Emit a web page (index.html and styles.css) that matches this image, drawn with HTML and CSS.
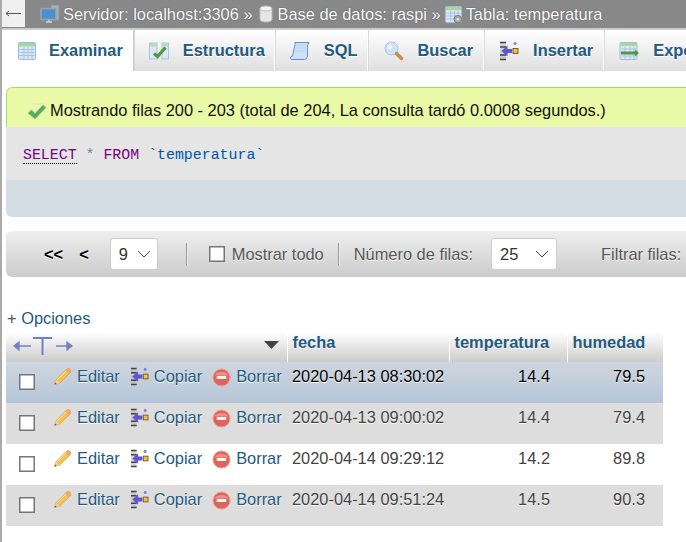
FILE: index.html
```html
<!DOCTYPE html>
<html lang="es">
<head>
<meta charset="utf-8">
<title>temperatura</title>
<link rel="stylesheet" href="styles.css">
</head>
<body>
<svg class="defs" width="0" height="0" aria-hidden="true">
  <defs>
    <symbol id="i-table" viewBox="0 0 20 20">
      <rect x="1.500" y="1.500" width="17" height="17" rx="1.500" fill="#dbe8f7" stroke="#9dbde0"/>
      <rect x="2" y="2" width="16" height="3.500" fill="#a9d69a"/>
      <path d="M2.500 8.500h15M2.500 11.500h15M2.500 14.500h15M7 6v12M11 6v12M15 6v12" stroke="#a9c3e3" fill="none"/>
    </symbol>
    <symbol id="i-struct" viewBox="0 0 20 20">
      <rect x="0.500" y="2" width="7.500" height="16" fill="#dbe8f7" stroke="#a9c3e3"/>
      <rect x="13" y="2" width="6.500" height="16" fill="#dbe8f7" stroke="#a9c3e3"/>
      <rect x="1" y="2.500" width="6.500" height="3" fill="#b9dca8"/>
      <rect x="13.500" y="2.500" width="5.500" height="3" fill="#b9dca8"/>
      <path d="M5 12.500l3.500 3 8-9" stroke="#4f9a3c" stroke-width="3.200" fill="none"/>
    </symbol>
    <symbol id="i-sql" viewBox="0 0 20 20">
      <path d="M5 1.500h14l-1.500 3v9.500c0 2-1 4.500-3 4.500H2c-1 0-1.500-.7-1.500-1.700 0-1 1-1.600 2-1.600L5 4z" fill="#cfe1f6" stroke="#5f93cf"/>
      <path d="M6.500 4h10M6 7h10M5.500 10h10" stroke="#b9d2ee" fill="none"/>
    </symbol>
    <symbol id="i-search" viewBox="0 0 20 20">
      <circle cx="7.500" cy="7.500" r="6.500" fill="#cfe3f8" stroke="#a8c6e6"/>
      <circle cx="6" cy="6" r="2.500" fill="#eef6fe"/>
      <path d="M12.500 12.500l5 5" stroke="#c98a4a" stroke-width="3.500" stroke-linecap="round"/>
    </symbol>
    <symbol id="i-insert" viewBox="0 0 20 20">
      <rect x="1" y="2" width="6" height="16" fill="#bbb" opacity=".6"/>
      <path d="M1 1.500h6M1 18.500h6M1 6h6M1 14h6" stroke="#444" stroke-width="1.600" fill="none"/>
      <path d="M2.500 10l6-5.500V8h4.500v4H8.500v3.500z" fill="#5d55d6"/>
      <rect x="14" y="7.500" width="5" height="5" fill="#eec14c" stroke="#6b5420" stroke-width=".9"/>
      <circle cx="16" cy="2.500" r="1.600" fill="#7f86d8"/>
    </symbol>
    <symbol id="i-export" viewBox="0 0 20 20">
      <rect x="1" y="1.500" width="17" height="17" rx="1" fill="#dbe8f7" stroke="#9dbde0"/>
      <rect x="1.500" y="2" width="16" height="3" fill="#a9d69a"/>
      <path d="M2 8h15M2 15h15M6 6v12M11 6v12M15 6v12" stroke="#a9c3e3" fill="none"/>
      <path d="M2 10.500h14V8.500l4 3.500-4 3.500v-2H2z" fill="#4f9a3c"/>
    </symbol>
    <symbol id="i-ok" viewBox="0 0 20 20">
      <path d="M1 11l3.500-3 3.500 3.500L16 3l3 2.500L8 17z" fill="#5aab5f" stroke="#8cc690" stroke-width=".6"/>
      <path d="M4 2h13" stroke="#ddd" fill="none"/>
    </symbol>
    <symbol id="i-edit" viewBox="0 0 20 20">
      <path d="M1.500 18.500l1.500-5L14 2.500c1.200-1.200 3-1.100 4 0s1 2.700 0 3.800L7 17z" fill="#f2c356" stroke="#d99a3a" stroke-width=".7"/>
      <path d="M14 2.500c1.200-1.200 3-1.100 4 0s1 2.700 0 3.800l-1.500 1.400-4-4z" fill="#f0a868"/>
      <path d="M1.500 18.500l1.500-5 4 3.500z" fill="#e8d2a8"/>
      <path d="M1.500 18.500l.7-2.300 1.700 1.500z" fill="#6b5535"/>
      <path d="M4 13.500L14 4" stroke="#fbe9a8" fill="none"/>
    </symbol>
    <symbol id="i-del" viewBox="0 0 20 20">
      <circle cx="10" cy="10" r="9" fill="#e0635a" stroke="#e9a49c"/>
      <path d="M2.500 8a8 6 0 0 1 15 0z" fill="#ee8f86"/>
      <rect x="5" y="8.500" width="10" height="3" fill="#fff"/>
    </symbol>
  </defs>
</svg>

<div class="page">
  <header class="topbar">
    <button class="back" type="button"><svg viewBox="0 0 15 7" width="15" height="7"><path d="M0 3.500h15M0 3.500l3-2.500M0 3.500l3 2.500" fill="none" stroke="#555"/></svg></button>
    <span class="crumb">
      <svg class="crumb-icon" viewBox="0 0 20 20" width="20" height="20">
        <rect x="11" y="1" width="8" height="15" fill="#aab0b5" stroke="#8c9296"/>
        <circle cx="17" cy="10" r="1" fill="#6fd06f"/>
        <rect x="1" y="4.500" width="15" height="11" fill="#4f8fd0" stroke="#99a4ad" stroke-width="1.500"/>
        <path d="M6 18h6M9 16v2" stroke="#cfd3d6" stroke-width="1.500"/>
      </svg>
      Servidor: localhost:3306 »
    </span>
    <span class="crumb crumb-db">
      <svg class="crumb-icon db" viewBox="0 0 14 18" width="14" height="18">
        <path d="M1 3.500v11c0 1.500 2.700 2.500 6 2.500s6-1 6-2.500v-11z" fill="#e6e6e6" stroke="#bbb"/>
        <ellipse cx="7" cy="3.500" rx="6" ry="2.500" fill="#f6f6f6" stroke="#bbb"/>
      </svg>
      Base de datos: raspi »
    </span>
    <span class="crumb">
      <svg class="crumb-icon" viewBox="0 0 20 20" width="19" height="19">
        <use href="#i-table"/>
        <circle cx="14.500" cy="15" r="4" fill="#a5acb2" stroke="#777" stroke-width="1"/>
        <circle cx="14.500" cy="15" r="1.300" fill="#e5e5e5"/>
      </svg>
      Tabla: temperatura
    </span>
  </header>

  <nav class="tabs">
    <a class="tab tab-active"><svg class="tab-icon"><use href="#i-table"/></svg>Examinar</a>
    <a class="tab"><svg class="tab-icon"><use href="#i-struct"/></svg>Estructura</a>
    <a class="tab"><svg class="tab-icon"><use href="#i-sql"/></svg>SQL</a>
    <a class="tab tab-search"><svg class="tab-icon"><use href="#i-search"/></svg>Buscar</a>
    <a class="tab tab-insert"><svg class="tab-icon"><use href="#i-insert"/></svg>Insertar</a>
    <a class="tab"><svg class="tab-icon"><use href="#i-export"/></svg>Exportar</a>
  </nav>

  <main class="content">
    <div class="result-box">
      <div class="notice"><svg class="ok-icon"><use href="#i-ok"/></svg>Mostrando filas 200 - 203 (total de 204, La consulta tardó 0.0008 segundos.)</div>
      <div class="sql-code"><span class="kw kw-link">SELECT</span> <span class="op">*</span> <span class="kw">FROM</span> <span class="ident">`temperatura`</span></div>
      <div class="sql-tools"></div>
    </div>

    <div class="pager">
      <span class="nav-btn first">&lt;&lt;</span>
      <span class="nav-btn prev">&lt;</span>
      <span class="select-wrap page-select">
        <select class="select"><option>9</option></select>
        <svg class="chevron" viewBox="0 0 14 8" width="14" height="8"><path d="M1 1l6 6 6-6" fill="none" stroke="#444"/></svg>
      </span>
      <span class="rule first-rule"></span>
      <label class="show-all"><input class="check" type="checkbox"><span class="pager-text">Mostrar todo</span></label>
      <span class="rule second-rule"></span>
      <span class="pager-text rows-label">Número de filas:</span>
      <span class="select-wrap rows-select">
        <select class="select"><option>25</option></select>
        <svg class="chevron" viewBox="0 0 14 8" width="14" height="8"><path d="M1 1l6 6 6-6" fill="none" stroke="#444"/></svg>
      </span>
      <span class="pager-text filter-label">Filtrar filas:</span>
    </div>

    <a class="options"><span class="plus">+</span> Opciones</a>

    <table class="data">
      <colgroup>
        <col class="c-actions"><col class="c-date"><col class="c-temp"><col class="c-hum">
      </colgroup>
      <thead>
        <tr>
          <th class="th-tools">
            <div class="th-inner">
              <svg class="col-arrows" viewBox="0 0 60 20" width="60" height="20">
                <path d="M1 10h17M1 10l5-4v8zM43 10h16M59 10l-5-4v8z" fill="#7580c2" stroke="#7580c2" stroke-width="1.300"/>
                <path d="M20 2h19M29.500 2v17" stroke="#7580c2" stroke-width="2" fill="none"/>
              </svg>
              <svg class="sort-tri" viewBox="0 0 15 8" width="15" height="8"><path d="M0 0h15l-7.500 8z" fill="#444"/></svg>
            </div>
          </th>
          <th>fecha</th>
          <th>temperatura</th>
          <th>humedad</th>
        </tr>
      </thead>
      <tbody>
        <tr class="row-marked">
          <td class="actions"><div class="act-inner"><input class="check row-check" type="checkbox"><a class="act act-edit"><svg class="act-icon"><use href="#i-edit"/></svg>Editar</a><a class="act act-copy"><svg class="act-icon"><use href="#i-insert"/></svg>Copiar</a><a class="act act-del"><svg class="act-icon del"><use href="#i-del"/></svg>Borrar</a></div></td>
          <td>2020-04-13 08:30:02</td><td class="num">14.4</td><td class="num num-last">79.5</td>
        </tr>
        <tr class="row-grey">
          <td class="actions"><div class="act-inner"><input class="check row-check" type="checkbox"><a class="act act-edit"><svg class="act-icon"><use href="#i-edit"/></svg>Editar</a><a class="act act-copy"><svg class="act-icon"><use href="#i-insert"/></svg>Copiar</a><a class="act act-del"><svg class="act-icon del"><use href="#i-del"/></svg>Borrar</a></div></td>
          <td>2020-04-13 09:00:02</td><td class="num">14.4</td><td class="num num-last">79.4</td>
        </tr>
        <tr class="row-white">
          <td class="actions"><div class="act-inner"><input class="check row-check" type="checkbox"><a class="act act-edit"><svg class="act-icon"><use href="#i-edit"/></svg>Editar</a><a class="act act-copy"><svg class="act-icon"><use href="#i-insert"/></svg>Copiar</a><a class="act act-del"><svg class="act-icon del"><use href="#i-del"/></svg>Borrar</a></div></td>
          <td>2020-04-14 09:29:12</td><td class="num">14.2</td><td class="num num-last">89.8</td>
        </tr>
        <tr class="row-grey">
          <td class="actions"><div class="act-inner"><input class="check row-check" type="checkbox"><a class="act act-edit"><svg class="act-icon"><use href="#i-edit"/></svg>Editar</a><a class="act act-copy"><svg class="act-icon"><use href="#i-insert"/></svg>Copiar</a><a class="act act-del"><svg class="act-icon del"><use href="#i-del"/></svg>Borrar</a></div></td>
          <td>2020-04-14 09:51:24</td><td class="num">14.5</td><td class="num num-last">90.3</td>
        </tr>
      </tbody>
    </table>
  </main>
</div>
</body>
</html>
```

FILE: styles.css
```css
* { box-sizing: border-box; }
html, body { margin: 0; padding: 0; background: #fff; }
body {
  width: 686px;
  height: 542px;
  overflow: hidden;
  font-family: "Liberation Sans", Arial, sans-serif;
  font-size: 16.4px;
  color: #444;
}
.defs { display: block; height: 0; }
.page { border-left: 2px solid #aaa; height: 542px; width: 686px; overflow: hidden; }

.topbar {
  display: flex;
  align-items: center;
  height: 30px;
  background: #888;
  border-bottom: 2px solid #ccc;
  color: #fff;
  text-shadow: 0 0 1px #333;
  white-space: nowrap;
}
.back {
  display: flex;
  align-items: center;
  justify-content: center;
  width: 23px;
  height: 27px;
  margin: 0 15px 1px 0;
  padding: 0;
  border: 0;
  background: #f0f0f0;
}
.crumb { display: inline-flex; align-items: center; gap: 3px; margin-right: 6px; }
.crumb-db { margin-right: 3px; }
.crumb-icon { flex: none; }
.crumb-icon.db { margin-right: 2px; }

.tabs { display: flex; height: 41px; white-space: nowrap; }
.tab {
  display: flex;
  align-items: center;
  flex: none;
  height: 41px;
  padding: 0 9px 0 14px;
  background: linear-gradient(#fff, #dfdfdf);
  border-right: 1px solid #fff;
  border-left: 1px solid #d8d8d8;
  color: #235a81;
  font-weight: bold;
  text-shadow: 0 1px 0 #fff;
}
.tab-search { padding-left: 15px; padding-right: 10px; }
.tab-insert { padding-right: 10px; }
.tab-active {
  background: #fff;
  padding-left: 15px;
  padding-right: 10px;
  border-left: 0;
  border-right: 1px solid #ccc;
}
.tab-icon { width: 20px; height: 20px; margin-right: 14px; flex: none; }
.tab-active .tab-icon { margin-right: 12px; }

.content { padding: 16px 0 0 4px; width: 700px; }

.result-box { border-radius: 6px 0 0 6px; overflow: hidden; }
.notice {
  display: flex;
  align-items: center;
  height: 40px;
  padding: 6px 0 0 20px;
  background: #e9f9a5;
  border-top: 1px solid #a9d56a;
  border-left: 1px solid #a9d56a;
  border-radius: 6px 0 0 0;
  color: #111;
  white-space: nowrap;
}
.ok-icon { width: 20px; height: 20px; margin: 2px 3px 0 0; flex: none; }
.sql-code {
  height: 53px;
  padding: 20px 0 0 17px;
  background: #e5e5e5;
  font-family: "Liberation Mono", monospace;
  font-size: 14.9px;
  line-height: 17px;
  color: #555;
  white-space: pre;
}
.kw { color: #770088; }
.kw-link { border-bottom: 1px dotted #000; }
.op { color: #708090; }
.ident { color: #0055aa; }
.sql-tools { height: 37px; background: #d4dce4; }

.pager {
  position: relative;
  display: flex;
  align-items: center;
  height: 46px;
  margin-top: 14px;
  background: linear-gradient(#eee, #ccc);
  border-radius: 6px 0 0 6px;
  white-space: nowrap;
  color: #555;
  text-shadow: 0 1px 0 #fff;
}
.pager-text { padding-top: 1px; }
.nav-btn { color: #000; font-weight: bold; }
.first { margin-left: 38px; }
.prev { margin-left: 16px; }
.select-wrap { position: relative; display: block; height: 32px; }
.page-select { width: 48px; margin-left: 21px; }
.rows-select { width: 66px; margin-left: 18px; }
.select {
  appearance: none;
  display: block;
  width: 100%;
  height: 32px;
  padding: 0 0 0 8px;
  background: #fff;
  border: 1px solid #ccc;
  border-radius: 3px;
  font: 16.4px "Liberation Sans", sans-serif;
  color: #333;
}
.chevron { position: absolute; top: 12px; right: 7px; pointer-events: none; }
.rows-select .chevron { right: 8px; }
.rule { display: block; flex: none; width: 2px; height: 23px; background: #999; border-right: 1px solid #eee; }
.first-rule { margin-left: 28px; }
.second-rule { margin-left: 14px; }
.show-all { display: flex; align-items: center; margin-left: 21px; }
.check {
  appearance: none;
  display: block;
  flex: none;
  width: 16px;
  height: 16px;
  margin: 0 7px 0 0;
  background: #fff;
  border: 1px solid #767676;
  border-radius: 0;
  box-shadow: inset 0 0 0 .5px #767676;
}
.rows-label { margin-left: 14px; }
.filter-label { margin-left: 44px; }

.options {
  display: block;
  margin-top: 32px;
  height: 23px;
  line-height: 19px;
  padding-left: 1px;
  color: #235a81;
}
.plus { color: #555; }

.data {
  table-layout: fixed;
  border-collapse: collapse;
  width: 657px;
  margin: 0;
}
.c-actions { width: 281px; }
.c-date { width: 162px; }
.c-temp { width: 118px; }
.c-hum { width: 96px; }

.data th {
  height: 30px;
  padding: 0 0 10px 5px;
  background: linear-gradient(#fff, #ccc);
  border-left: 1px solid #fff;
  color: #235a81;
  font-weight: bold;
  text-align: left;
  white-space: nowrap;
  text-shadow: 0 1px 0 #fff;
}
.data th.th-tools { padding: 0 0 2px; border-left: 0; }
.th-inner { display: flex; align-items: center; justify-content: space-between; padding: 0 8px 0 7px; }
.sort-tri { margin-bottom: 3px; }
.data th:last-child { border-right: 1px solid #fff; }

.data td {
  height: 41px;
  padding: 5px 0 0 5px;
  vertical-align: top;
  line-height: 19px;
  white-space: nowrap;
  text-shadow: 0 1px 0 #fff;
}
.data td.num { text-align: right; padding-right: 17px; }
.data td.num-last { padding-right: 18px; }
.row-marked td { background: linear-gradient(#ced6df, #b6c6d7); color: #000; }
.row-grey td { background: #ddd; }
.row-white td { background: #fff; }
.data td.actions { padding: 0; }
.act-inner { display: flex; align-items: flex-start; height: 41px; }
.row-check { margin: 12px 0 0 13px; }
.act {
  display: flex;
  align-items: flex-start;
  padding-top: 5px;
  color: #235a81;
  text-shadow: 0 1px 0 #fff;
}
.act-edit { margin-left: 18px; }
.act-copy { margin-left: 10px; }
.act-del { margin-left: 10px; }
.act-icon { width: 19px; height: 19px; margin: 0 5px 0 0; flex: none; }
.act-icon.del { margin: 1px 5px 0 0; }
```
